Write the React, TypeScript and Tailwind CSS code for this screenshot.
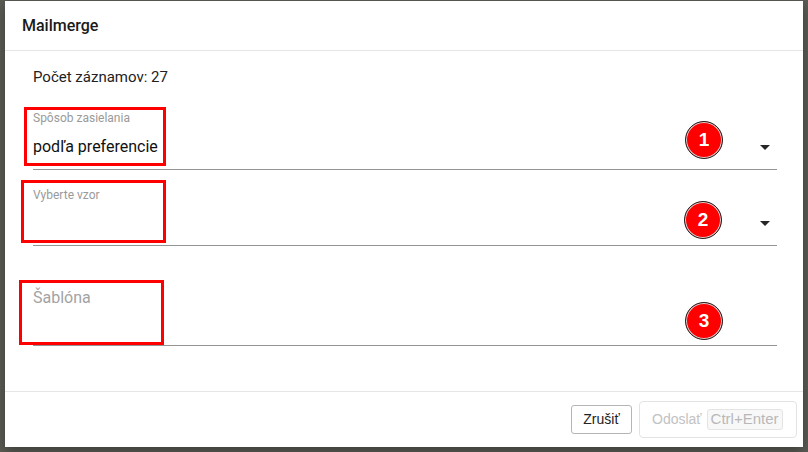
import { ReactNode } from 'react';

function DropArrow() {
  return (
    <svg width="24" height="24" viewBox="0 0 24 24" className="text-[#262626]">
      <path d="M7 10l5 5 5-5z" fill="currentColor" />
    </svg>
  );
}

function Marker({ n, className }: { n: number; className: string }) {
  return (
    <div
      className={`absolute w-[38px] h-[38px] rounded-full bg-[#fe0000] border border-[#222] shadow-[inset_0_0_0_1px_#d8d8d8] flex items-center justify-center text-white text-[19px] font-bold font-['Liberation_Sans',Arial,sans-serif] ${className}`}
    >
      {n}
    </div>
  );
}

function Field({ children, arrow, className }: { children: ReactNode; arrow?: boolean; className: string }) {
  return (
    <div className={`relative border-b border-[#949494] ${className}`}>
      {children}
      {arrow && (
        <div className="absolute right-0 bottom-[10px]">
          <DropArrow />
        </div>
      )}
    </div>
  );
}

export default function App() {
  return (
    <div className="w-[808px] h-[452px] bg-[#5c5c55] overflow-hidden pl-[5px] pt-[1px] font-['Roboto',sans-serif]">
      <div className="relative w-[798px] h-[446px] bg-white flex flex-col shadow-[0_4px_12px_rgba(0,0,0,0.35)]">
        {/* Header */}
        <div className="h-[50px] flex items-center pl-[17px] border-b border-[#e6e6e6] shrink-0">
          <span className="text-[16px] font-medium text-[#1a1a1a]">Mailmerge</span>
        </div>

        {/* Body */}
        <div className="flex-1 pl-[28px] pr-[26px] pt-[16px]">
          <div className="text-[15px] leading-5 text-[#222]">Počet záznamov: 27</div>

          <Field arrow className="mt-[18px] pt-[5px] pb-[10px]">
            <div className="text-[12px] leading-4 text-[#9a9a9a]">Spôsob zasielania</div>
            <div className="mt-[9px] text-[16px] leading-6 text-[#111]">podľa preferencie</div>
          </Field>

          <Field arrow className="pt-[17px] pb-[9px]">
            <div className="text-[12px] leading-4 text-[#9a9a9a]">Vyberte vzor</div>
            <div className="mt-[9px] h-6" />
          </Field>

          <Field className="pt-[40px] pb-[35px]">
            <div className="text-[16px] leading-6 text-[#a3a3a3]">Šablóna</div>
          </Field>
        </div>

        {/* Footer */}
        <div className="h-[56px] shrink-0 border-t border-[#e6e6e6] flex items-center justify-end gap-[7px] pr-[6px] font-['Liberation_Sans',Arial,sans-serif]">
          <button className="h-[29px] w-[61px] border border-[#b5b5b5] rounded-[3px] text-[14px] text-[#222] bg-white">
            Zrušiť
          </button>
          <button className="h-[37px] w-[158px] border border-[#e3e3e3] rounded-[4px] flex items-center pl-[12px] gap-[5px] text-[14px] text-[#c2c2c2] bg-white">
            <span>Odoslať</span>
            <span className="h-[21px] px-[3px] border border-[#e4e4e4] rounded-[3px] bg-[#f8f8f8] flex items-center text-[#b8b8b8] text-[15px]">
              Ctrl+Enter
            </span>
          </button>
        </div>

        {/* Annotations */}
        <div className="absolute left-[19px] top-[106px] w-[142px] h-[59px] border-[3px] border-[#f00]" />
        <div className="absolute left-[16px] top-[179px] w-[145px] h-[63px] border-[3px] border-[#f00]" />
        <div className="absolute left-[14px] top-[279px] w-[145px] h-[65px] border-[3px] border-[#f00]" />
        <Marker n={1} className="left-[680px] top-[120px]" />
        <Marker n={2} className="left-[679px] top-[200px]" />
        <Marker n={3} className="left-[680px] top-[301px]" />
      </div>
    </div>
  );
}
